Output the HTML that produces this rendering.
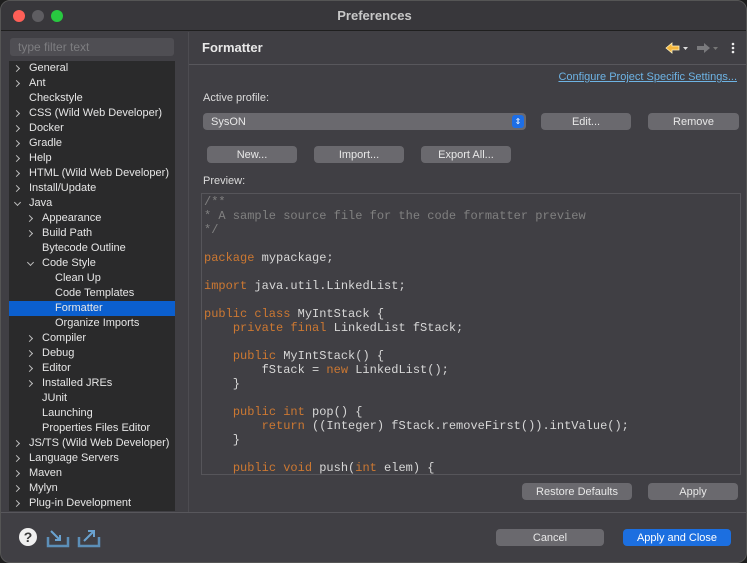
<!DOCTYPE html>
<html><head><style>
*{margin:0;padding:0;box-sizing:border-box}
body{width:747px;height:563px;background:#1e1e1e;font-family:"Liberation Sans",sans-serif;font-size:11px;color:#dcdcdc;overflow:hidden;position:relative}
.win{position:absolute;left:0;top:0;width:747px;height:563px;background:#403f44;border-radius:10px;overflow:hidden;border:1px solid #555}
.title{position:absolute;left:0;top:0;width:747px;height:30px;background:#38373b;border-bottom:1px solid #1f1f1f;text-align:center;line-height:29px;font-size:13px;font-weight:bold;color:#c8c8c8}
.dot{position:absolute;top:9px;width:12px;height:12px;border-radius:50%}
.a{position:absolute;white-space:nowrap}
.filter{position:absolute;left:9px;top:37px;width:164px;height:18px;background:#4f4e53;border-radius:3px;color:#7d7d80;font-size:12px;line-height:18px;padding-left:8px}
.tree{position:absolute;left:8px;top:60px;width:166px;height:450px;background:#2a2a2b;overflow:hidden}
.ti{position:absolute;height:15px;line-height:15px;font-size:11px;color:#e6e6e6;white-space:nowrap;left:0;width:166px}
.ti.sel{background:#0b5fce}
.r,.d{position:absolute;width:5px;height:5px;border-right:1.2px solid #bbb;border-bottom:1.2px solid #bbb}
.r{top:5px;transform:rotate(-45deg)}
.d{top:4px;transform:rotate(45deg)}
.btn{position:absolute;height:17px;background:#6a696e;border-radius:4px;text-align:center;line-height:18px;color:#e8e8e8;font-size:11px}
pre{font-family:"Liberation Mono",monospace;font-size:12px;line-height:14px;color:#d7d7d7}
.k{color:#cc7832}.c{color:#808080}
</style></head><body>
<div class="win">
<div class="title">Preferences</div>
<div class="dot" style="left:12px;background:#fe5f57"></div>
<div class="dot" style="left:31px;background:#5e5d61"></div>
<div class="dot" style="left:50px;background:#28c840"></div>

<div class="filter">type filter text</div>
<div class="tree">
<div class="ti" style="top:0"><span class="r" style="left:5px"></span><span class="a" style="left:20px">General</span></div>
<div class="ti" style="top:15px"><span class="r" style="left:5px"></span><span class="a" style="left:20px">Ant</span></div>
<div class="ti" style="top:30px"><span class="a" style="left:20px">Checkstyle</span></div>
<div class="ti" style="top:45px"><span class="r" style="left:5px"></span><span class="a" style="left:20px">CSS (Wild Web Developer)</span></div>
<div class="ti" style="top:60px"><span class="r" style="left:5px"></span><span class="a" style="left:20px">Docker</span></div>
<div class="ti" style="top:75px"><span class="r" style="left:5px"></span><span class="a" style="left:20px">Gradle</span></div>
<div class="ti" style="top:90px"><span class="r" style="left:5px"></span><span class="a" style="left:20px">Help</span></div>
<div class="ti" style="top:105px"><span class="r" style="left:5px"></span><span class="a" style="left:20px">HTML (Wild Web Developer)</span></div>
<div class="ti" style="top:120px"><span class="r" style="left:5px"></span><span class="a" style="left:20px">Install/Update</span></div>
<div class="ti" style="top:135px"><span class="d" style="left:6px"></span><span class="a" style="left:20px">Java</span></div>
<div class="ti" style="top:150px"><span class="r" style="left:18px"></span><span class="a" style="left:33px">Appearance</span></div>
<div class="ti" style="top:165px"><span class="r" style="left:18px"></span><span class="a" style="left:33px">Build Path</span></div>
<div class="ti" style="top:180px"><span class="a" style="left:33px">Bytecode Outline</span></div>
<div class="ti" style="top:195px"><span class="d" style="left:19px"></span><span class="a" style="left:33px">Code Style</span></div>
<div class="ti" style="top:210px"><span class="a" style="left:46px">Clean Up</span></div>
<div class="ti" style="top:225px"><span class="a" style="left:46px">Code Templates</span></div>
<div class="ti sel" style="top:240px"><span class="a" style="left:46px">Formatter</span></div>
<div class="ti" style="top:255px"><span class="a" style="left:46px">Organize Imports</span></div>
<div class="ti" style="top:270px"><span class="r" style="left:18px"></span><span class="a" style="left:33px">Compiler</span></div>
<div class="ti" style="top:285px"><span class="r" style="left:18px"></span><span class="a" style="left:33px">Debug</span></div>
<div class="ti" style="top:300px"><span class="r" style="left:18px"></span><span class="a" style="left:33px">Editor</span></div>
<div class="ti" style="top:315px"><span class="r" style="left:18px"></span><span class="a" style="left:33px">Installed JREs</span></div>
<div class="ti" style="top:330px"><span class="a" style="left:33px">JUnit</span></div>
<div class="ti" style="top:345px"><span class="a" style="left:33px">Launching</span></div>
<div class="ti" style="top:360px"><span class="a" style="left:33px">Properties Files Editor</span></div>
<div class="ti" style="top:375px"><span class="r" style="left:5px"></span><span class="a" style="left:20px">JS/TS (Wild Web Developer)</span></div>
<div class="ti" style="top:390px"><span class="r" style="left:5px"></span><span class="a" style="left:20px">Language Servers</span></div>
<div class="ti" style="top:405px"><span class="r" style="left:5px"></span><span class="a" style="left:20px">Maven</span></div>
<div class="ti" style="top:420px"><span class="r" style="left:5px"></span><span class="a" style="left:20px">Mylyn</span></div>
<div class="ti" style="top:435px"><span class="r" style="left:5px"></span><span class="a" style="left:20px">Plug-in Development</span></div>
</div>

<div class="a" style="left:187px;top:31px;width:1px;height:480px;background:#4d4c51"></div>
<div class="a" style="left:188px;top:63px;width:559px;height:1px;background:#58575c"></div>
<div class="a" style="left:201px;top:39px;font-size:13px;font-weight:bold;color:#e8e8e8">Formatter</div>
<svg class="a" style="left:663px;top:40px" width="80" height="14">
<path d="M2 7 L8 2 L8 5 L15 5 L15 9 L8 9 L8 12 Z" fill="#f5b63c" stroke="#fff3c0" stroke-width="0.8"/>
<path d="M19 6 L24 6 L21.5 9Z" fill="#ddd"/>
<path d="M46 7 L40 2 L40 5 L33 5 L33 9 L40 9 L40 12 Z" fill="#7a7a7d"/>
<path d="M49 6 L54 6 L51.5 9Z" fill="#777"/>
<circle cx="69" cy="3" r="1.3" fill="#eee"/><circle cx="69" cy="7" r="1.3" fill="#eee"/><circle cx="69" cy="11" r="1.3" fill="#eee"/>
</svg>
<div class="a" style="right:9px;top:70px;color:#6db3e4;text-decoration:underline">Configure Project Specific Settings...</div>
<div class="a" style="left:202px;top:91px">Active profile:</div>
<div class="btn" style="left:202px;top:112px;width:323px;text-align:left;padding-left:8px">SysON</div>
<div class="a" style="left:511px;top:114px;width:12px;height:13px;background:#1d6ee6;border-radius:3px;color:#fff;font-size:8px;text-align:center;line-height:13px">&#8661;</div>
<div class="btn" style="left:540px;top:112px;width:90px">Edit...</div>
<div class="btn" style="left:647px;top:112px;width:91px">Remove</div>
<div class="btn" style="left:206px;top:145px;width:90px">New...</div>
<div class="btn" style="left:313px;top:145px;width:90px">Import...</div>
<div class="btn" style="left:420px;top:145px;width:90px">Export All...</div>
<div class="a" style="left:202px;top:174px">Preview:</div>
<div class="a" style="left:200px;top:192px;width:540px;height:282px;border:1px solid #56555a;overflow:hidden">
<pre style="position:absolute;left:2px;top:1px"><span class="c">/**
* A sample source file for the code formatter preview
*/</span>

<span class="k">package</span> mypackage;

<span class="k">import</span> java.util.LinkedList;

<span class="k">public class</span> MyIntStack {
    <span class="k">private final</span> LinkedList fStack;

    <span class="k">public</span> MyIntStack() {
        fStack = <span class="k">new</span> LinkedList();
    }

    <span class="k">public int</span> pop() {
        <span class="k">return</span> ((Integer) fStack.removeFirst()).intValue();
    }

    <span class="k">public void</span> push(<span class="k">int</span> elem) {</pre>
</div>
<div class="btn" style="left:521px;top:482px;width:110px">Restore Defaults</div>
<div class="btn" style="left:647px;top:482px;width:90px">Apply</div>
<div class="a" style="left:0;top:511px;width:747px;height:1px;background:#58575c"></div>
<div class="btn" style="left:495px;top:528px;width:108px">Cancel</div>
<div class="btn" style="left:622px;top:528px;width:108px;background:#1c6fe0;color:#fff">Apply and Close</div>
<svg class="a" style="left:17px;top:526px" width="85" height="22">
<circle cx="10" cy="10" r="9" fill="#f0f0f0"/>
<text x="10" y="15" font-family="Liberation Sans" font-weight="bold" font-size="14" text-anchor="middle" fill="#3a3a3a">?</text>
<path d="M30 10 V19 H50 V10" fill="none" stroke="#5c8fb8" stroke-width="2.5"/>
<path d="M33 4 L42 13 M42 8 V13 H37" fill="none" stroke="#6aa2d0" stroke-width="2"/>
<path d="M61 10 V19 H81 V10" fill="none" stroke="#5c8fb8" stroke-width="2.5"/>
<path d="M66 14 L76 4 M70 4 H76 V10" fill="none" stroke="#6aa2d0" stroke-width="2"/>
</svg>
</div>
</body></html>
